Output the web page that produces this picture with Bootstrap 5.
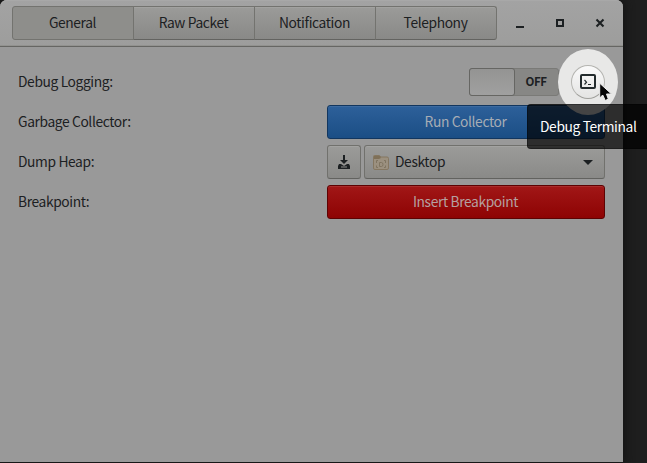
<!DOCTYPE html>
<html lang="en">
<head>
<meta charset="utf-8">
<title>Debug</title>
<meta name="viewport" content="width=device-width, initial-scale=1">
<link href="https://cdn.jsdelivr.net/npm/bootstrap@5.3.0/dist/css/bootstrap.min.css" rel="stylesheet">
<script src="https://cdn.jsdelivr.net/npm/bootstrap@5.3.0/dist/js/bootstrap.bundle.min.js" defer></script>
<style>
body{background:#1e1e1e;font-family:"Noto Sans CJK SC","Noto Sans",sans-serif;font-size:13.8px;letter-spacing:-.38px;line-height:20px;color:#1c2022;height:463px}
.win{width:623px;height:462px;background:#999;border-radius:7px 7px 0 0;box-shadow:0 0 10px 2px #141414}
.title-strip{height:47px;padding:6px 15px 6px 12px;background:linear-gradient(#a3a3a3,#9d9d9c);border-bottom:1px solid #666663;box-shadow:inset 0 -1px #92928f,inset 0 1px #a8a8a8;border-radius:7px 7px 0 0}
.tabs{width:485px;height:34px}
.tabs .btn{flex:1 1 0;font:inherit;letter-spacing:inherit;color:#1c2022;padding:0 1px 3px 0;border:1px solid #73736f;border-bottom-color:#636360;border-radius:3px;background:linear-gradient(#9b9b99,#898987);box-shadow:inset 0 1px #a2a2a0}
.tabs .btn.active{background:#8e8e8b;box-shadow:none;color:#1c2022;border-color:#73736f}
.winctl{gap:24px}
.form-area{padding:18px 18px 0;display:grid;row-gap:6px}
.line{height:34px}
.ctl{width:278px;height:34px}
.gbtn{font:inherit;letter-spacing:inherit;height:34px;padding:0 1px 3px 0;border-radius:3px;border:1px solid #71716d;border-bottom-color:#62625f;background:linear-gradient(#9b9b99,#8a8a88);box-shadow:inset 0 1px #a3a3a1;color:#1c2022}
.save-btn{width:34px;margin-right:3px;padding:0 0 1px}
.folder-btn{padding:0 8px 1px}
.folder-btn span{margin-top:-2px}
.run{background:linear-gradient(#2d609a,#1b4e85);border-color:#12365f;box-shadow:inset 0 1px #3d6ba0;color:#a7adb5}
.stop{background:linear-gradient(#a11717,#8e0303);border-color:#5e0202;box-shadow:inset 0 1px #aa2c2c;color:#b5a0a0}
.toggle{width:90px;height:28px;margin-right:46px;border:1px solid #7a7a77;border-radius:3px;background:#878785;font-size:11.5px;letter-spacing:-.4px;font-weight:700}
.toggle span{margin:-2px 1px 0 0}
.knob{width:46px;height:28px;margin:-1px 0 -1px -1px;border:1px solid #666663;border-radius:3px;background:linear-gradient(#949493,#a0a0a0)}
.spot{left:558px;top:49px;width:60px;height:66px;border-radius:50%;background:#e8e8e7}
.round-btn{width:34px;height:34px;border-radius:50%;border:1px solid #b4b4b0;border-bottom-color:#a0a09c;background:linear-gradient(#fafafa,#e4e4e3);padding:0}
.tip{left:527px;top:104px;width:130px;height:45px;border-radius:4px;background:rgba(0,0,0,.705);box-shadow:inset 1px 1px rgba(0,0,0,.3),inset 0 -1px rgba(0,0,0,.3);color:#fff;padding:12px 0 0 13px;white-space:nowrap}
.pointer{left:599px;top:82px}
.caption{margin-top:-3px}
.folder{margin-right:6px}
</style>
</head>
<body class="overflow-hidden position-relative">
<main class="win">
<header class="title-strip d-flex align-items-center justify-content-between">
<div class="tabs btn-group"><button class="btn active">General</button><button class="btn">Raw Packet</button><button class="btn">Notification</button><button class="btn">Telephony</button></div>
<div class="winctl d-flex">
<svg width="16" height="16"><path d="M4 11h8v2H4z" fill="#1c2022"/></svg>
<svg width="16" height="16"><path d="M5 5h6v6H5z" fill="none" stroke="#1c2022" stroke-width="2"/></svg>
<svg width="16" height="16"><path d="M4.500 4.500l7 7m0-7l-7 7" stroke="#1c2022" stroke-width="2.100"/></svg>
</div>
</header>
<section class="form-area">
<div class="line d-flex align-items-center justify-content-between"><span class="caption">Debug Logging:</span>
<div class="toggle d-flex align-items-center"><div class="knob"></div><span class="flex-fill text-center">OFF</span></div></div>
<div class="line d-flex align-items-center justify-content-between"><span class="caption">Garbage Collector:</span><button class="btn gbtn run ctl">Run Collector</button></div>
<div class="line d-flex align-items-center justify-content-between"><span class="caption">Dump Heap:</span>
<div class="ctl d-flex"><button class="btn gbtn save-btn d-flex align-items-center justify-content-center flex-shrink-0" aria-label="Save">
<svg width="16" height="16"><path d="M7 1h2v5h3L8 10 4 6h3z" fill="#1c2022"/><path d="M3 10h2l3 2 3-2h2l1 2v3H2v-3z" fill="#1c2022"/><path d="M5 13h6" stroke="#8e8e8c"/></svg></button>
<button class="btn gbtn folder-btn d-flex align-items-center flex-fill">
<svg width="16" height="16" class="folder"><path d="M.5 14V2.500q0-1 1-1H6q1 0 1.500 1.500H14q1.500 0 1.500 1.500V14q0 1.500-1.500 1.500H2Q.5 15.500.5 14z" fill="#9b907f" stroke="#857761"/><path d="M1 2h6l1 2-2 1H1z" fill="#7f7058"/><path d="M6.500 8.500h2q1.500 0 1.500 2t-1.500 2h-2zM3.500 9V6.500H5M11 6.500h1.500V9M3.500 11.500v2H5M11 13.500h1.500v-2" fill="none" stroke="#7f7461"/></svg>
<span>Desktop</span>
<svg class="ms-auto" width="16" height="16"><path d="M3 6h10l-5 5z" fill="#1c2022"/></svg></button></div></div>
<div class="line d-flex align-items-center justify-content-between"><span class="caption">Breakpoint:</span><button class="btn gbtn stop ctl">Insert Breakpoint</button></div>
</section>
</main>
<div class="spot position-absolute d-flex align-items-center justify-content-center"><button class="round-btn d-flex align-items-center justify-content-center" aria-label="Debug Terminal">
<svg width="16" height="16"><rect x="1" y="1" width="14" height="13" rx="1" fill="none" stroke="#232b2d" stroke-width="2"/><path d="M4.500 6L6.500 8.200 4.500 10.500M8 10.500h3" fill="none" stroke="#232b2d" stroke-width="1.200"/></svg></button></div>
<div class="tip position-absolute">Debug Terminal</div>
<svg class="pointer position-absolute" width="16" height="20"><path d="M.7 1.200V16l3-3 2.600 5.500 3-1.400L7.500 12h5z" fill="#050505" stroke="#eee"/></svg>
</body>
</html>
